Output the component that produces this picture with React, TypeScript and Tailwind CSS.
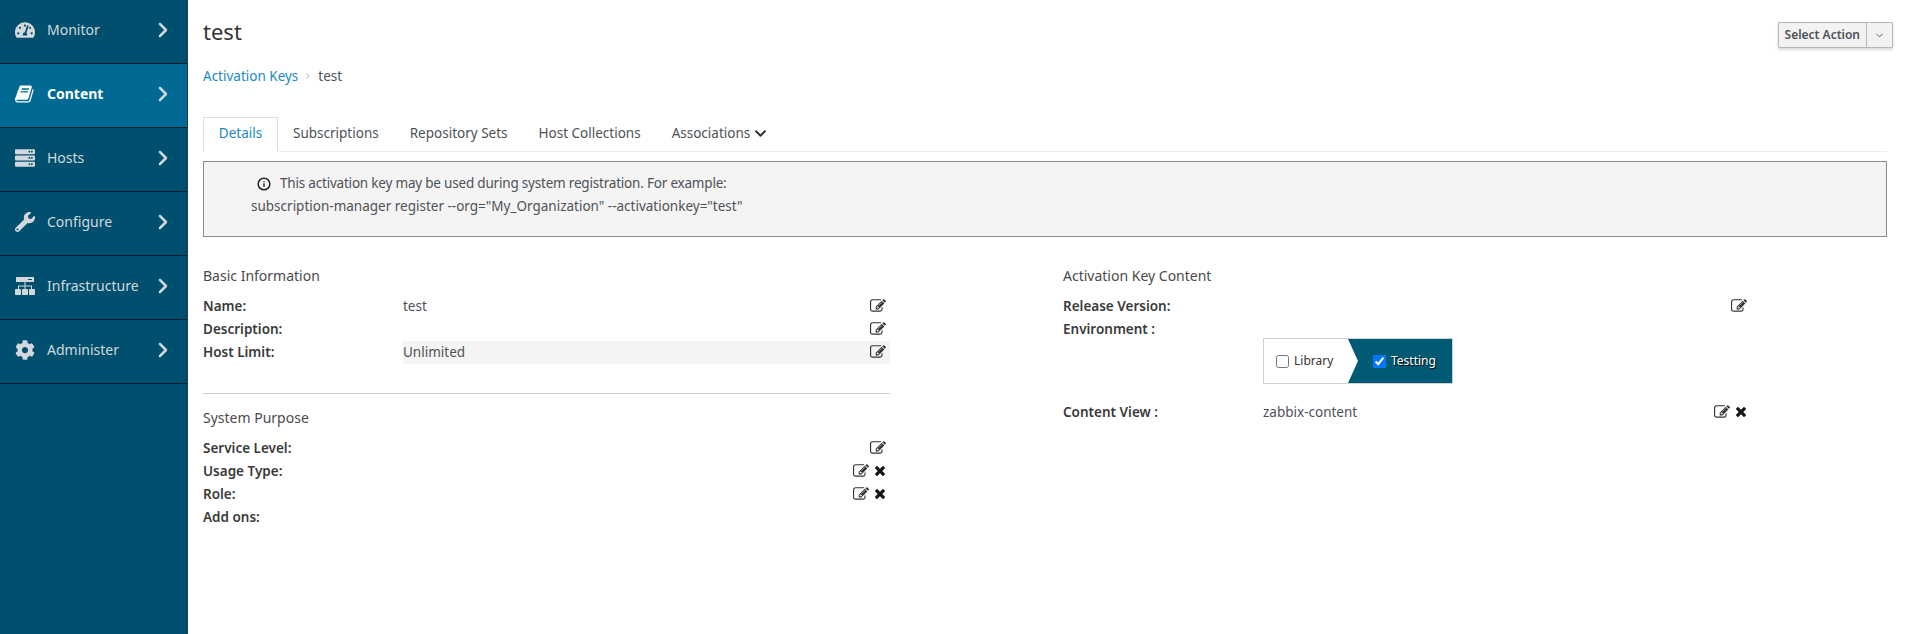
import { FaChevronDown, FaCog, FaServer, FaTachometerAlt, FaWrench } from "react-icons/fa";
import { FiChevronDown, FiChevronRight, FiInfo } from "react-icons/fi";
import type { ComponentType } from "react";

function SlantedBook({ className }: { className?: string }) {
  return (
    <svg viewBox="0 0 1792 1792" fill="currentColor" className={className}>
      <path d="M1639 478q40 57 18 129l-275 906q-19 64-76.5 107.5t-122.5 43.5h-923q-77 0-148.5-53.5t-99.5-131.5q-24-67-2-127 0-4 3-27t4-37q1-8-3-21.5t-3-19.5q2-11 8-21t16.5-23.5 16.5-23.5q23-38 45-91.5t30-91.5q3-10 .5-30t-.5-28q3-11 17-28t17-23q21-36 42-92t25-90q1-9-2.5-32t.5-28q4-13 22-30.5t22-22.5q19-26 42.5-84.5t27.5-96.5q1-8-3-25.5t-2-26.5q2-8 9-18t18-23 17-21q8-12 16.5-30.5t15-35 16-36 19.5-32 26.5-23.5 36-11.5 47.5 5.5l-1 3q38-9 51-9h761q74 0 114 56t18 130l-274 906q-36 119-71.5 153.5t-128.5 34.5h-869q-27 0-38 15-11 16-1 43 24 70 144 70h923q29 0 56-15.5t35-41.5l300-987q7-22 5-57 38 15 59 43zm-1064 2q-4 13 2 22.5t20 9.5h608q13 0 25.5-9.5t16.5-22.5l21-64q4-13-2-22.5t-20-9.5h-608q-13 0-25.5 9.5t-16.5 22.5zm-83 256q-4 13 2 22.5t20 9.5h608q13 0 25.5-9.5t16.5-22.5l21-64q4-13-2-22.5t-20-9.5h-608q-13 0-25.5 9.5t-16.5 22.5z" />
    </svg>
  );
}

// wide rack on top, three hosts wired below it
function NetworkTree({ className }: { className?: string }) {
  return (
    <svg viewBox="0 0 20 18" fill="currentColor" className={className}>
      <path d="M1 0h18v5H1zM13 2v1h4V2z" fillRule="evenodd" />
      <path d="M9.5 5h1v3.5h6.500V12h-1V9.500h-5.500V12h-1V9.500H4V12H3V8.500h6.500z" />
      <rect x="0" y="12" width="6" height="6" rx="0.8" />
      <rect x="7" y="12" width="6" height="6" rx="0.8" />
      <rect x="14" y="12" width="6" height="6" rx="0.8" />
    </svg>
  );
}

function EditIcon() {
  return (
    <svg viewBox="0 0 1792 1792" fill="currentColor" className="h-[16px] w-[16px]">
      <path d="M888 1184l116-116-152-152-116 116v56h96v96h56zm440-720q-16-16-33 1l-350 350q-17 17-1 33t33-1l350-350q17-17 1-33zm80 594v190q0 119-84.5 203.5t-203.5 84.5h-832q-119 0-203.5-84.5t-84.5-203.5v-832q0-119 84.5-203.5t203.5-84.5h832q63 0 117 25 15 7 18 23 3 17-9 29l-49 49q-14 14-32 8-23-6-45-6h-832q-66 0-113 47t-47 113v832q0 66 47 113t113 47h832q66 0 113-47t47-113v-126q0-13 9-22l64-64q15-15 35-7t20 29zm-96-738l288 288-672 672h-288v-288zm444 132l-92 92-288-288 92-92q28-28 68-28t68 28l152 152q28 28 28 68t-28 68z" />
    </svg>
  );
}

function CloseIcon() {
  return (
    <svg viewBox="0 0 1408 1792" fill="currentColor" className="h-[15px] w-[12px] text-[#151515]">
      <path d="M1298 1322q0 40-28 68l-136 136q-28 28-68 28t-68-28l-294-294-294 294q-28 28-68 28t-68-28l-136-136q-28-28-28-68t28-68l294-294-294-294q-28-28-28-68t28-68l136-136q28-28 68-28t68 28l294 294 294-294q28-28 68-28t68 28l136 136q28 28 28 68t-28 68l-294 294 294 294q28 28 28 68z" />
    </svg>
  );
}

const nav: { label: string; icon: ComponentType<{ className?: string }>; active?: boolean }[] = [
  { label: "Monitor", icon: FaTachometerAlt },
  { label: "Content", icon: SlantedBook, active: true },
  { label: "Hosts", icon: FaServer },
  { label: "Configure", icon: FaWrench },
  { label: "Infrastructure", icon: NetworkTree },
  { label: "Administer", icon: FaCog },
];

const tabs = ["Subscriptions", "Repository Sets", "Host Collections"];

function Row({
  label,
  value,
  edit = true,
  remove,
  highlight,
}: {
  label: string;
  value?: string;
  edit?: boolean;
  remove?: boolean;
  highlight?: boolean;
}) {
  return (
    <div className="flex h-[23px] items-center">
      <div className="w-[200px] shrink-0 font-semibold text-[#3a3a3a]">{label}</div>
      <div className={`flex h-full flex-1 items-center justify-between pr-1 ${highlight ? "bg-[#f4f4f4]" : ""}`}>
        <span>{value}</span>
        <span className="flex items-center gap-[5px] pb-[2px] text-[#333]">
          {edit && <EditIcon />}
          {remove && <CloseIcon />}
        </span>
      </div>
    </div>
  );
}

function Heading({ children }: { children: string }) {
  return <h3 className="text-[14px] leading-5 text-[#4a4a4a]">{children}</h3>;
}

export default function App() {
  return (
    <div className="flex h-[634px] w-full overflow-hidden bg-white font-['Noto_Sans',sans-serif] text-[13.5px] text-[#4d5258]">
      <aside className="h-full w-[188px] shrink-0 border-r border-[#2b3a42] bg-[#004f6e]">
        {nav.map(({ label, icon: Icon, active }) => (
          <div
            key={label}
            className={`flex h-[64px] items-center border-b border-[#06202c] pb-1 pl-[15px] pr-[12px] ${
              active ? "bg-[#006a94] font-bold text-white" : "text-[#d2d8db]"
            }`}
          >
            <Icon className="mr-[12px] h-5 w-5 shrink-0" />
            <span className="flex-1 text-[14px]">{label}</span>
            <FiChevronRight className={`h-6 w-6 shrink-0 ${active ? "text-[#cfd8dc]" : ""}`} strokeWidth={2.5} />
          </div>
        ))}
      </aside>

      <main className="min-w-0 flex-1 pl-[15px] pr-[20px]">
        <div className="flex h-[64px] items-start justify-between">
          <h1 className="pt-[15px] text-[22px] leading-8 text-[#333]">test</h1>
          <div className="mr-[-6px] mt-[22px] flex h-[26px] rounded-[1px] border border-[#b7b7b7] bg-[#f2f2f2] text-[12px] font-semibold text-[#4d5258] shadow-[0_2px_3px_rgba(0,0,0,0.15)]">
            <div className="flex items-center border-r border-[#b7b7b7] px-[6px]">Select Action</div>
            <div className="flex w-[25px] items-center justify-center">
              <FiChevronDown className="h-[11px] w-[11px]" />
            </div>
          </div>
        </div>

        <div className="flex h-[24px] items-center">
          <a className="text-[#1a8ac4]">Activation Keys</a>
          <FiChevronRight className="mx-[5px] h-[10px] w-[10px] text-[#9a9a9a]" />
          <span>test</span>
        </div>

        <div className="mt-[29px] flex h-[35px] border-b border-[#ededed]">
          <div className="flex h-[35px] w-[75px] items-center justify-center border border-b-white border-[#ddd] bg-white pb-[2px] text-[#1a8ac4]">
            Details
          </div>
          <div className="flex items-center pb-[2px] pl-[15px]">
            {tabs.map((t) => (
              <span key={t} className="mr-[31px]">
                {t}
              </span>
            ))}
            <span className="flex items-center gap-1">
              Associations
              <FaChevronDown className="h-[13px] w-[13px] text-[#333]" />
            </span>
          </div>
        </div>

        <div className="mt-[9px] h-[76px] border border-[#8b8b8b] bg-[#f4f4f4] pl-[47px] pt-[10px] leading-[23px]">
          <div className="flex items-center pl-[6px] tracking-[-0.2px]">
            <FiInfo className="mr-[9px] h-[14px] w-[14px] text-[#222]" strokeWidth={2.5} />
            This activation key may be used during system registration. For example:
          </div>
          <div>subscription-manager register --org="My_Organization" --activationkey="test"</div>
        </div>

        <div className="mt-[29px] grid grid-cols-[687px_1fr] gap-x-[173px]">
          <section>
            <Heading>Basic Information</Heading>
            <div className="mt-[9px]">
              <Row label="Name:" value="test" />
              <Row label="Description:" />
              <Row label="Host Limit:" value="Unlimited" highlight />
            </div>
            <hr className="mt-[29px] border-[#cfcfcf]" />
            <div className="mt-[14px]">
              <Heading>System Purpose</Heading>
            </div>
            <div className="mt-[9px]">
              <Row label="Service Level:" />
              <Row label="Usage Type:" remove />
              <Row label="Role:" remove />
              <Row label="Add ons:" edit={false} />
            </div>
          </section>

          <section className="w-[688px]">
            <Heading>Activation Key Content</Heading>
            <div className="mt-[9px]">
              <Row label="Release Version:" />
              <Row label="Environment :" edit={false} />
            </div>
            <div className="mb-[17px] ml-[200px] mt-[-3px] flex h-[46px] w-[190px] border border-[#d1d1d1] bg-[#005a73] text-[12px]">
              <div className="flex w-[94px] items-center bg-white pl-[12px] text-[#333] [clip-path:polygon(0_0,84px_0,94px_50%,84px_100%,0_100%)]">
                <input type="checkbox" readOnly className="mr-[5px] h-[13px] w-[13px]" />
                Library
              </div>
              <div className="flex items-center pl-[15px] text-white [text-shadow:1px_1px_1px_#000]">
                <input type="checkbox" checked readOnly className="mr-[5px] h-[13px] w-[13px]" />
                Testting
              </div>
            </div>
            <Row label="Content View :" value="zabbix-content" remove />
          </section>
        </div>
      </main>
    </div>
  );
}
